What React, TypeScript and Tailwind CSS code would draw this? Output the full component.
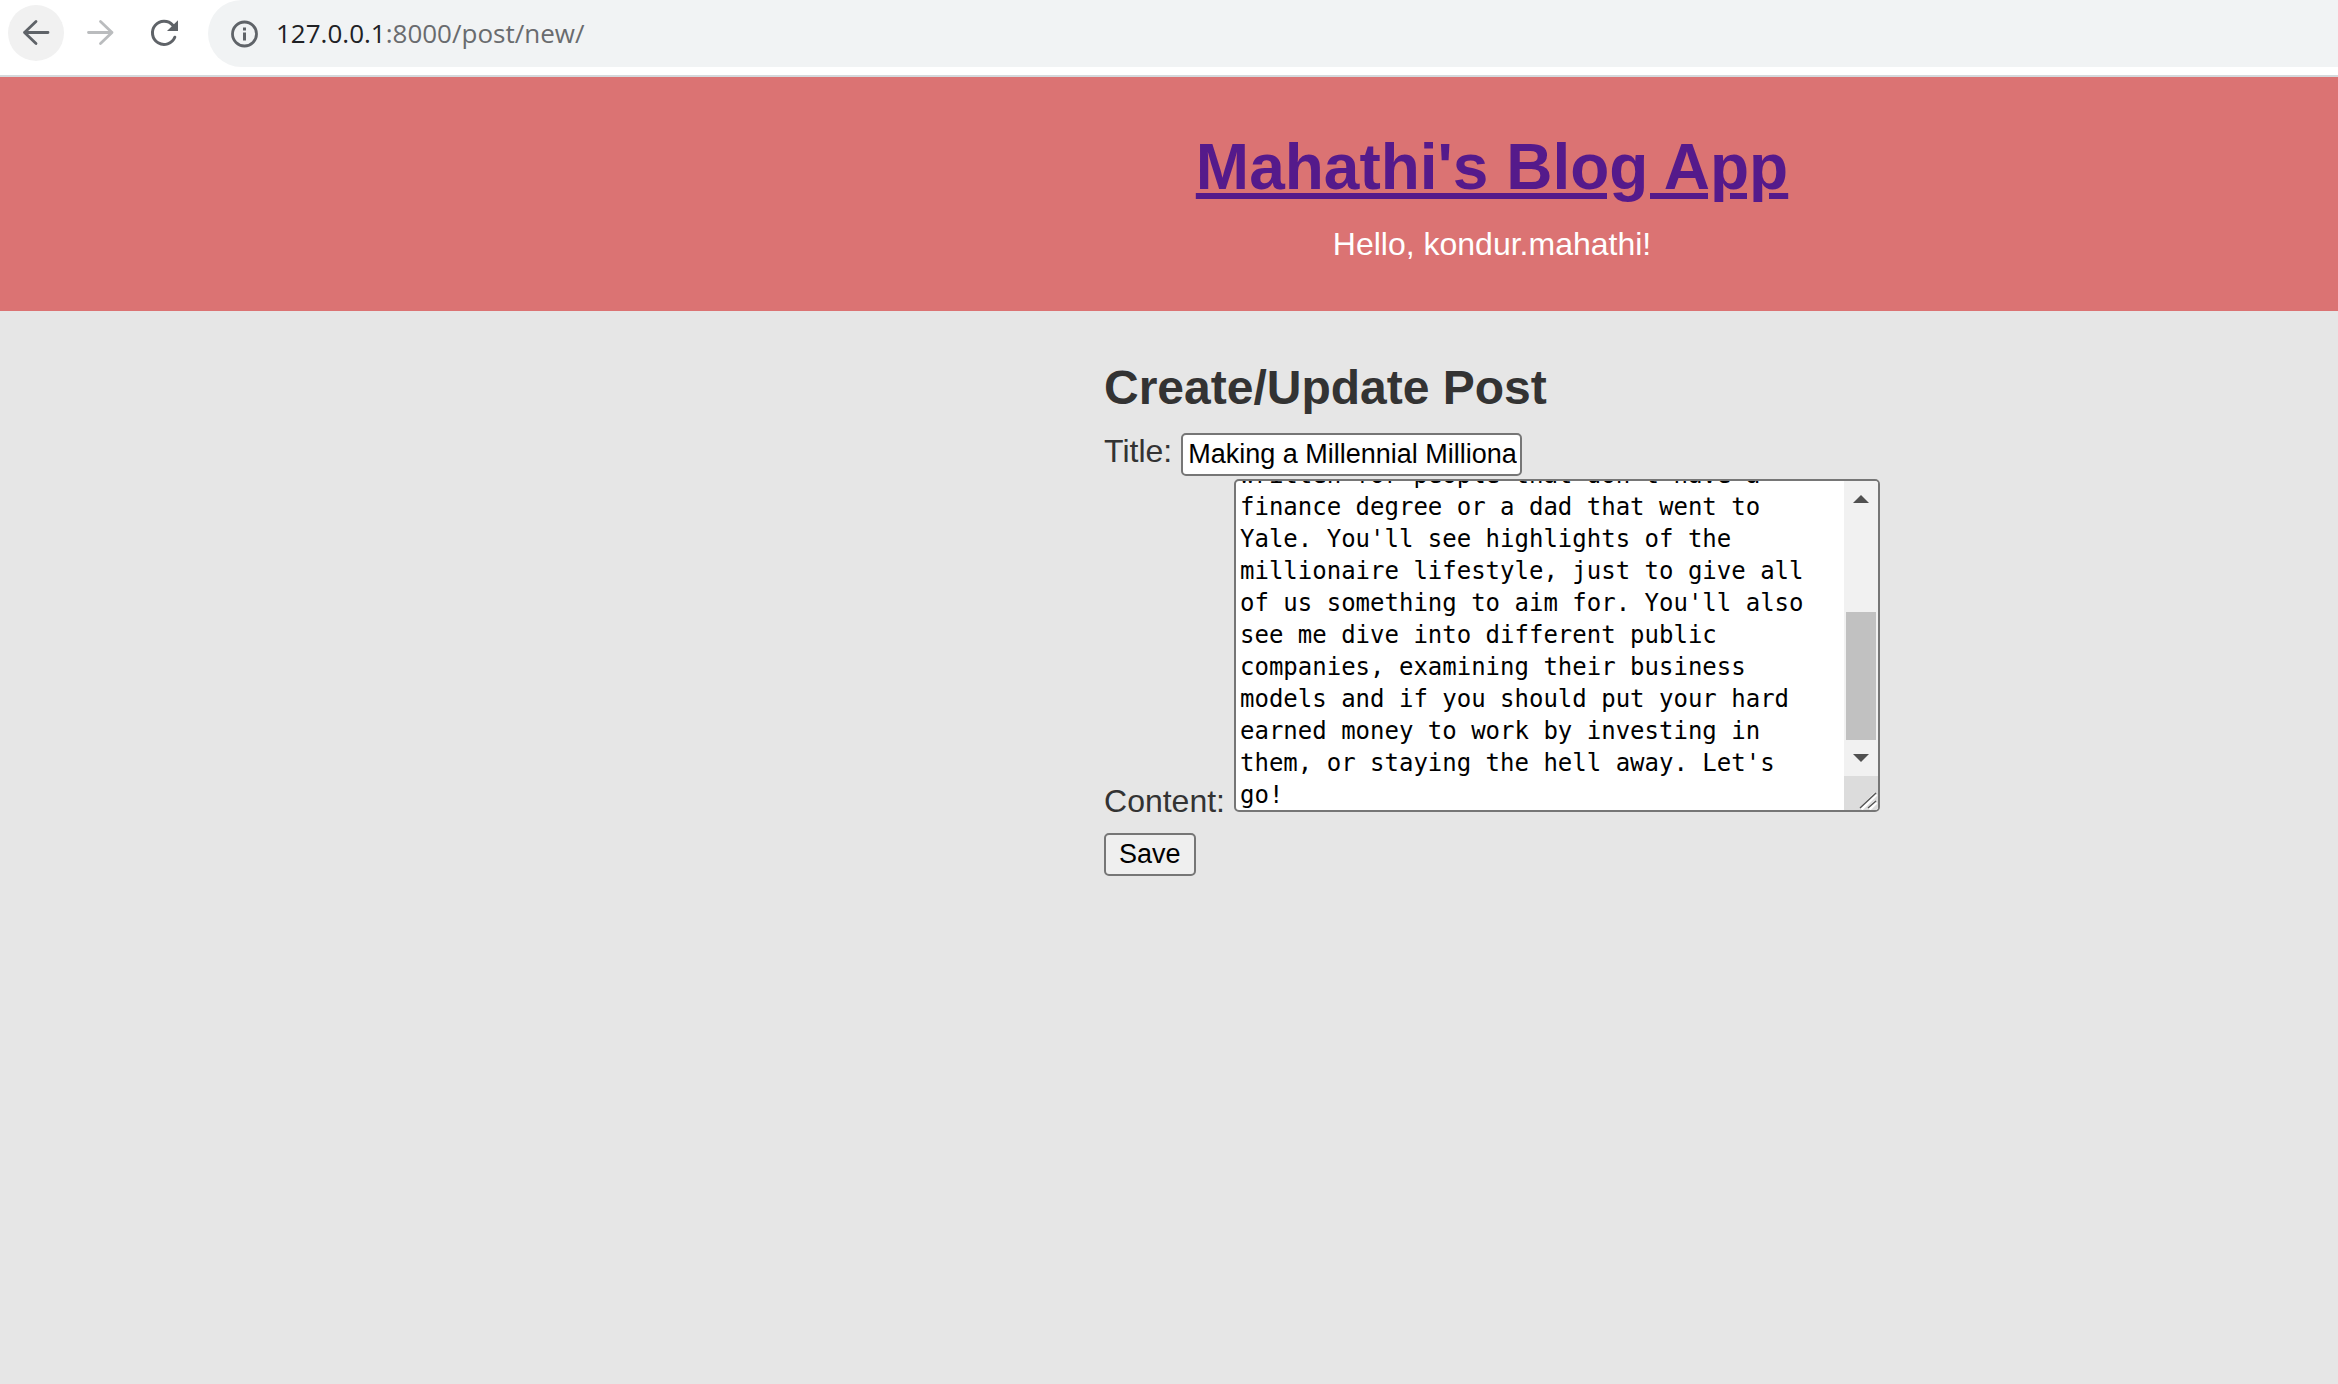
import { useLayoutEffect, useRef } from 'react';

const content = [
  "written for people that don't have a",
  'finance degree or a dad that went to',
  "Yale. You'll see highlights of the",
  'millionaire lifestyle, just to give all',
  "of us something to aim for. You'll also",
  'see me dive into different public',
  'companies, examining their business',
  'models and if you should put your hard',
  'earned money to work by investing in',
  "them, or staying the hell away. Let's",
  'go!',
].join('\n');

function BrowserBar() {
  return (
    <div className="flex h-[77px] items-start border-b-2 border-[#d5d9dc] bg-white pl-2">
      <button type="button" aria-label="Back" className="mt-[5px] flex size-14 items-center justify-center rounded-full bg-[#f1f1f1]">
        <svg className="size-8" viewBox="0 0 32 32" fill="none" stroke="#5f6368" strokeWidth="2.8" strokeLinecap="round" strokeLinejoin="round" aria-hidden="true">
          <path d="M28 15.500H4.500M16 4.500l-11.500 11 11.500 11" />
        </svg>
      </button>
      <button type="button" aria-label="Forward" className="mt-[5px] ml-2 flex size-14 items-center justify-center">
        <svg className="size-8" viewBox="0 0 32 32" fill="none" stroke="#babcbe" strokeWidth="2.8" strokeLinecap="round" strokeLinejoin="round" aria-hidden="true">
          <path d="M4.500 15.500H28M16.500 4.500l11.500 11-11.500 11" />
        </svg>
      </button>
      <button type="button" aria-label="Reload" className="mt-[5px] ml-2 flex size-14 items-center justify-center">
        <svg className="size-8" viewBox="0 0 32 32" aria-hidden="true">
          <path d="M24.800 8.200A11.600 11.600 0 1 0 26.800 20.200" fill="none" stroke="#5f6368" strokeWidth="3" strokeLinecap="round" />
          <path d="M30 3.300V14H19z" fill="#5f6368" />
        </svg>
      </button>
      <div className="ml-4 flex h-[67px] grow items-center rounded-l-full bg-[#f1f3f4] pl-[22px]">
        <svg className="size-7 shrink-0" viewBox="0 0 28 28" aria-hidden="true">
          <circle cx="14.500" cy="14" r="12" fill="none" stroke="#5f6368" strokeWidth="2.800" />
          <path d="M13 12.500h3v8h-3zM13 7.500h3v3h-3z" fill="#5f6368" />
        </svg>
        <a href="#" className="ml-[18px] pb-[2px] font-['Open_Sans',sans-serif] text-[26px] leading-9 text-[#696b6e]">
          <span className="text-[#202124]">127.0.0.1</span>:8000/post/new/
        </a>
      </div>
    </div>
  );
}

function ContentBox() {
  const box = useRef<HTMLTextAreaElement>(null);
  useLayoutEffect(() => {
    if (box.current) box.current.scrollTop = 23;
  }, []);
  return (
    <div className="flex h-[333px] w-[646px] overflow-hidden rounded-[5px] border-2 border-[#767676] bg-white">
      <textarea
        id="content"
        ref={box}
        defaultValue={content}
        className="min-w-0 grow resize-none overflow-hidden py-px pl-1 font-['DejaVu_Sans_Mono',monospace] text-2xl leading-8 text-black outline-none"
      />
      <div className="flex w-[34px] shrink-0 flex-col bg-[#f1f1f1]" aria-hidden="true">
        <svg className="h-[131px] w-full" viewBox="0 0 34 131">
          <path d="M9 22l8-8 8 8z" fill="#505050" />
        </svg>
        <div className="mx-[2px] h-32 bg-[#c1c1c1]" />
        <svg className="h-9 w-full" viewBox="0 0 34 36">
          <path d="M9 14h16l-8 8z" fill="#505050" />
        </svg>
        <svg className="h-[34px] w-full bg-[#dcdcdc]" viewBox="0 0 34 34">
          <path d="M17 33l15-15M25 33l7-7" stroke="#fff" strokeWidth="4" />
          <path d="M16 32l16-15M24 32l8-7" stroke="#555" strokeWidth="1.500" />
        </svg>
      </div>
    </div>
  );
}

export default function App() {
  return (
    <div className="flex min-h-screen flex-col bg-[#e6e6e6] font-['Liberation_Sans',Arial,sans-serif] text-[32px] leading-9 text-[#333333]">
      <BrowserBar />
      <header className="flex h-[234px] flex-col items-center bg-[#db7373] pt-[54px] pl-[646px]">
        <h1 className="text-[64px] leading-[72px] font-bold">
          <a href="#" className="text-[#551a8b] underline">Mahathi's Blog App</a>
        </h1>
        <p className="mt-[23px] text-white">Hello, kondur.mahathi!</p>
      </header>
      <main className="flex justify-center pt-[50px] pl-[646px]">
        <form onSubmit={(e) => e.preventDefault()}>
          <h2 className="text-[48px] leading-[54px] font-bold">Create/Update Post</h2>
          <div className="mt-[18px] flex items-start">
            <label htmlFor="title" className="mr-[9px]">Title:</label>
            <input
              id="title"
              type="text"
              defaultValue="Making a Millennial Milliona"
              className="h-[43px] w-[341px] rounded-[5px] border-2 border-[#767676] bg-white pr-[3px] pl-[5px] text-[27px] leading-8 text-black"
            />
          </div>
          <div className="mt-[3px] flex items-end">
            <label htmlFor="content" className="mr-[9px] -mb-[7px]">Content:</label>
            <ContentBox />
          </div>
          <button type="submit" className="mt-[21px] flex h-[43px] items-center rounded-[5px] border-2 border-[#767676] bg-[#efefef] px-[13px] pb-[2px] text-[27px] leading-8 text-black">
            Save
          </button>
        </form>
      </main>
    </div>
  );
}
